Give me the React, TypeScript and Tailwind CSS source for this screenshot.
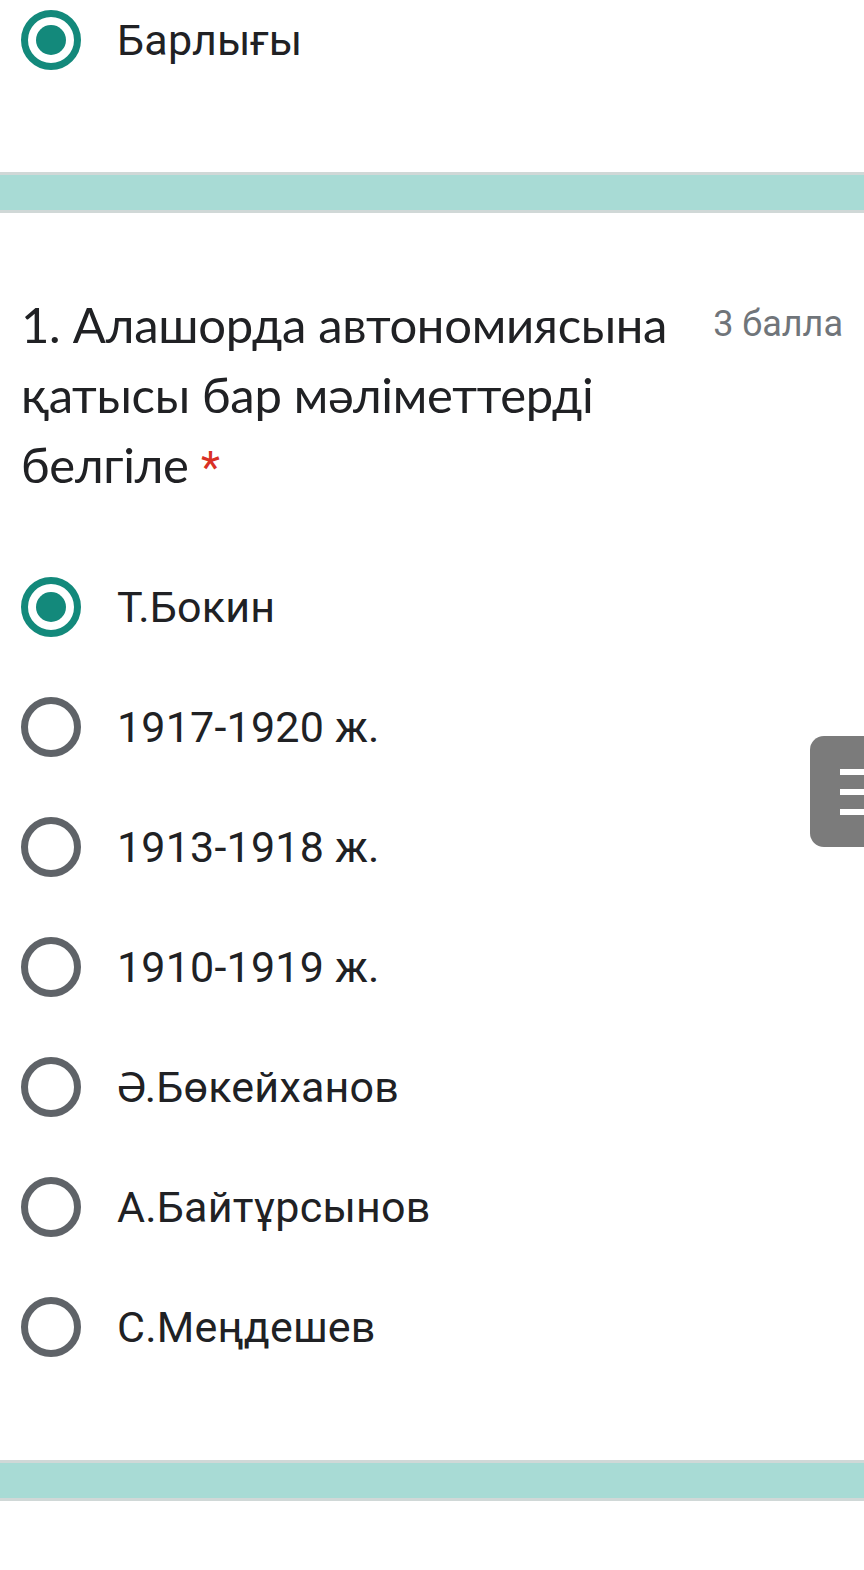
import React from 'react';

const options = [
  { label: 'Т.Бокин', checked: true },
  { label: '1917-1920 ж.', checked: false },
  { label: '1913-1918 ж.', checked: false },
  { label: '1910-1919 ж.', checked: false },
  { label: 'Ә.Бөкейханов', checked: false },
  { label: 'А.Байтұрсынов', checked: false },
  { label: 'С.Меңдешев', checked: false },
];

const Radio: React.FC<{ checked: boolean }> = ({ checked }) => (
  <div
    className={`w-[60px] h-[60px] shrink-0 rounded-full border-[7px] flex items-center justify-center ${
      checked ? 'border-[#13897b]' : 'border-[#5f6368]'
    }`}
  >
    {checked && <div className="w-[30px] h-[30px] rounded-full bg-[#13897b]" />}
  </div>
);

const Option: React.FC<{ label: string; checked: boolean }> = ({ label, checked }) => (
  <div className="flex items-center gap-[36px] h-[120px]">
    <Radio checked={checked} />
    <span className="text-[43px] tracking-[0.2px] text-[#202124]">{label}</span>
  </div>
);

const Band = () => <div className="h-[41px] border-y-[3px] border-[#d0d8d7] bg-[#a8dbd5]" />;

export default function App() {
  return (
    <div className="relative w-full min-h-[1570px] bg-white overflow-hidden font-['Roboto',sans-serif]">
      <div className="px-[21px] pt-[10px] pb-[102px]">
        <div className="flex items-center gap-[36px] h-[60px]">
          <Radio checked />
          <span className="text-[43px] tracking-[0.2px] text-[#202124]">Барлығы</span>
        </div>
      </div>

      <Band />

      <div className="px-[21px] pt-[76px] pb-[73px]">
        <div className="flex items-start justify-between gap-[18px]">
          <h2 className="flex-1 text-[49px] leading-[70px] tracking-[-0.3px] text-[#202124] font-['Lato',sans-serif] font-normal">
            1. Алашорда автономиясына қатысы бар мәліметтерді белгіле{' '}
            <span className="text-[#d93025] text-[44px] leading-[0] font-['Roboto',sans-serif]">*</span>
          </h2>
          <span className="text-[36px] leading-[70px] text-[#70757a] whitespace-nowrap">3 балла</span>
        </div>

        <div className="mt-[48px]">
          {options.map(o => (
            <Option key={o.label} label={o.label} checked={o.checked} />
          ))}
        </div>
      </div>

      <Band />

      <div className="absolute left-[810px] top-[736px] w-[70px] h-[111px] rounded-l-[14px] bg-[#7b7b7b]">
        <div className="absolute left-[30px] top-[33px] w-[40px] h-[6px] bg-white" />
        <div className="absolute left-[30px] top-[53px] w-[40px] h-[6px] bg-white" />
        <div className="absolute left-[30px] top-[73px] w-[40px] h-[6px] bg-white" />
      </div>
    </div>
  );
}
